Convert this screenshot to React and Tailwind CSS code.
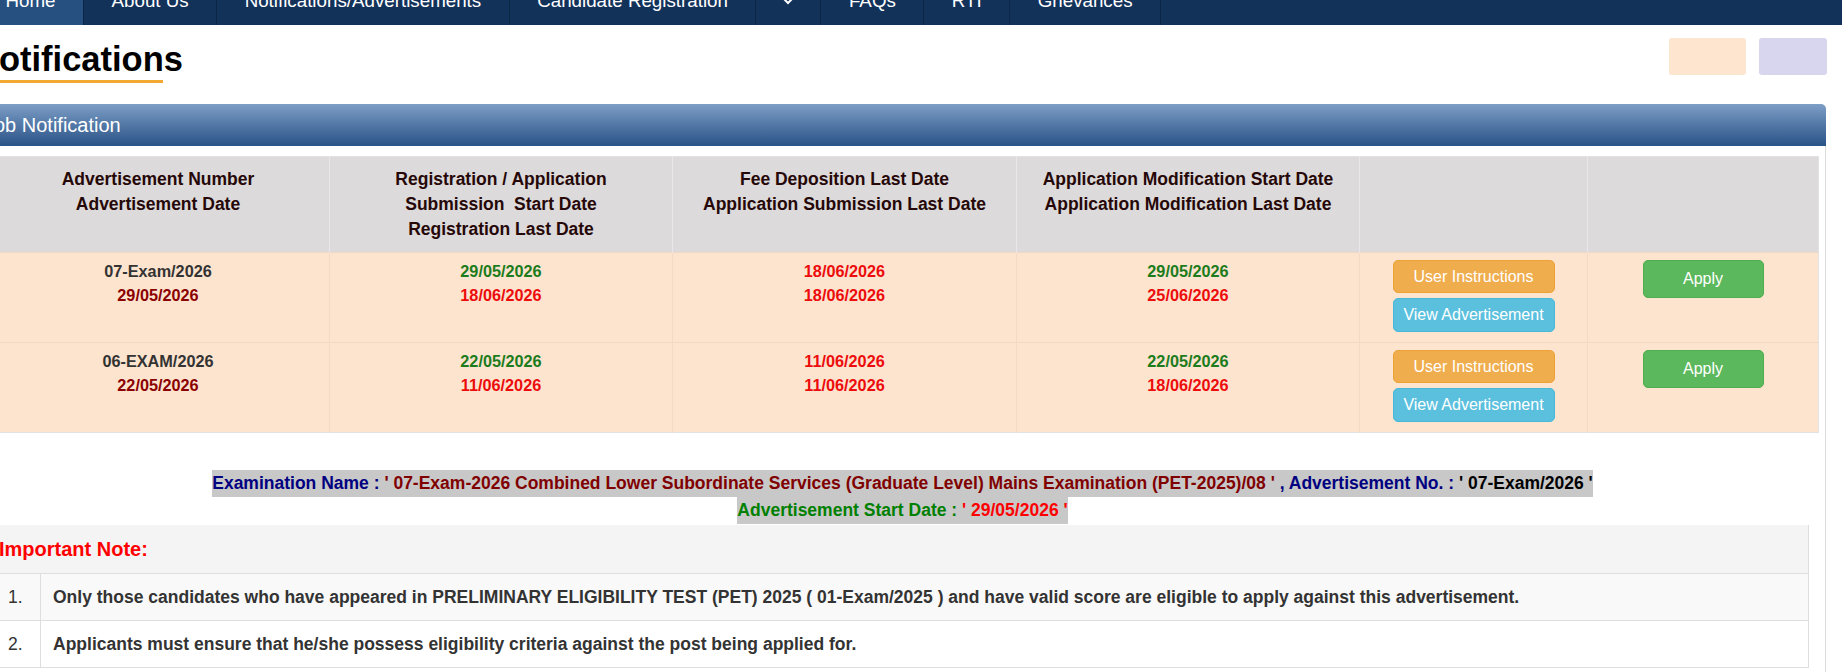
import React from 'react';

const navItems = [
  { label: 'Home', active: true },
  { label: 'About Us' },
  { label: 'Notifications/Advertisements' },
  { label: 'Candidate Registration' },
  { label: 'more', chevron: true },
  { label: 'FAQs' },
  { label: 'RTI' },
  { label: 'Grievances' },
];

const rows = [
  {
    adv: '07-Exam/2026',
    advDate: '29/05/2026',
    regStart: '29/05/2026',
    regLast: '18/06/2026',
    fee: '18/06/2026',
    subLast: '18/06/2026',
    modStart: '29/05/2026',
    modLast: '25/06/2026',
  },
  {
    adv: '06-EXAM/2026',
    advDate: '22/05/2026',
    regStart: '22/05/2026',
    regLast: '11/06/2026',
    fee: '11/06/2026',
    subLast: '11/06/2026',
    modStart: '22/05/2026',
    modLast: '18/06/2026',
  },
];

function DateCell({ top, bottom, topClass, bottomClass }) {
  return (
    <td className="border-r border-[#f3dac6] px-[12px] pt-[6px] pb-[10px] align-top text-center text-[16.25px] font-bold leading-[24px]">
      <div className={topClass}>{top}</div>
      <div className={bottomClass}>{bottom}</div>
    </td>
  );
}

export default function App() {
  return (
    <div className="min-h-screen overflow-hidden bg-white font-['Liberation_Sans',Arial,Helvetica,sans-serif] text-[#333]">
      <nav className="flex h-[25px] overflow-hidden bg-[#13325a] text-[18.75px] leading-[27px] text-white">
        <ul className="-ml-[22px] flex shrink-0">
          {navItems.map((item) =>
            item.chevron ? (
              <li key={item.label} className="flex items-end border-r border-[#0c2645] px-[24px] pb-[20px]">
                <svg width="16" height="10" viewBox="0 0 16 10" fill="none" stroke="white" strokeWidth="2">
                  <path d="M1.5 1.5 L8 8 L14.5 1.5" />
                </svg>
              </li>
            ) : (
              <li
                key={item.label}
                className={
                  item.active
                    ? 'flex items-end border-r border-[#0c2645] bg-[#25507f] px-[27.5px] pb-[11px]'
                    : 'flex items-end border-r border-[#0c2645] px-[27.5px] pb-[11px]'
                }
              >
                {item.label}
              </li>
            )
          )}
        </ul>
      </nav>

      <div className="-ml-[21px] w-[1848px]">
        <div className="mt-[13px] flex items-start justify-between">
          <div className="pt-[1px]">
            <h1 className="-ml-[5px] text-[34.5px] font-bold leading-[40px] text-black">Notifications</h1>
            <div className="mt-[1px] h-[3px] w-[184px] bg-[#f2a833]" />
          </div>
          <div className="flex gap-[13px]">
            <div className="h-[37px] w-[77px] rounded-[3px] bg-[#fde5d0]" />
            <div className="h-[37px] w-[68px] rounded-[3px] bg-[#d8d5ef]" />
          </div>
        </div>

        <div className="mt-[21px] mr-[1px]">
          <div className="flex h-[42px] items-center rounded-t-[5px] bg-linear-to-b from-[#7d9ec6] to-[#2a5387] pl-[5px] text-[20px] text-white">
            Job Notification
          </div>

          <div className="border-x border-b border-[#dcdcdc] px-[6px] pt-[10px] pb-[20px]">
            <table className="w-full table-fixed border-collapse border border-[#e2e2e2]">
              <colgroup>
                <col className="w-[343px]" />
                <col className="w-[343px]" />
                <col className="w-[344px]" />
                <col className="w-[343px]" />
                <col className="w-[228px]" />
                <col />
              </colgroup>
              <thead>
                <tr className="bg-[#dcdada] text-[17.5px] font-bold leading-[25px] text-[#260808]">
                  <th className="border-r border-[#e9e7e7] px-[12px] py-[10px] align-top">
                    Advertisement Number
                    <br />
                    Advertisement Date
                  </th>
                  <th className="border-r border-[#e9e7e7] px-[12px] py-[10px] align-top">
                    Registration / Application
                    <br />
                    Submission&nbsp; Start Date
                    <br />
                    Registration Last Date
                  </th>
                  <th className="border-r border-[#e9e7e7] px-[12px] py-[10px] align-top">
                    Fee Deposition Last Date
                    <br />
                    Application Submission Last Date
                  </th>
                  <th className="border-r border-[#e9e7e7] px-[12px] py-[10px] align-top">
                    Application Modification Start Date
                    <br />
                    Application Modification Last Date
                  </th>
                  <th className="border-r border-[#e9e7e7]" />
                  <th />
                </tr>
              </thead>
              <tbody>
                {rows.map((r) => (
                  <tr key={r.adv} className="border-t border-[#f1d8c4] bg-[#fde4cf]">
                    <DateCell top={r.adv} bottom={r.advDate} topClass="text-[#333]" bottomClass="text-[#8b0000]" />
                    <DateCell top={r.regStart} bottom={r.regLast} topClass="text-[#1c7c1c]" bottomClass="text-[#ec0c0c]" />
                    <DateCell top={r.fee} bottom={r.subLast} topClass="text-[#ec0c0c]" bottomClass="text-[#ec0c0c]" />
                    <DateCell top={r.modStart} bottom={r.modLast} topClass="text-[#1c7c1c]" bottomClass="text-[#ec0c0c]" />
                    <td className="border-r border-[#f3dac6] pt-[6px] pb-[10px] align-top">
                      <div className="mx-auto flex w-[162px] flex-col gap-[5px] pt-[1px]">
                        <button className="h-[33px] rounded-[5px] border border-[#eea236] bg-[#f0ad4e] text-[16px] text-white">
                          User Instructions
                        </button>
                        <button className="h-[34px] rounded-[5px] border border-[#46b8da] bg-[#5bc0de] text-[16px] text-white">
                          View Advertisement
                        </button>
                      </div>
                    </td>
                    <td className="pt-[6px] pb-[10px] align-top">
                      <button className="mx-auto mt-[1px] block h-[38px] w-[121px] rounded-[5px] border border-[#4cae4c] bg-[#5cb85c] text-[16px] text-white">
                        Apply
                      </button>
                    </td>
                  </tr>
                ))}
              </tbody>
            </table>

            <div className="mt-[37px] text-center text-[17.5px] font-bold leading-[27px]">
              <span className="inline-block bg-[#c8c8c8]">
                <span className="text-[#000080]">Examination Name : </span>
                <span className="text-[#800000]">' 07-Exam-2026 Combined Lower Subordinate Services (Graduate Level) Mains Examination (PET-2025)/08 '</span>
                <span className="text-[#000080]"> , Advertisement No. : </span>
                <span className="text-black">' 07-Exam/2026 '</span>
              </span>
              <br />
              <span className="inline-block bg-[#c8c8c8]">
                <span className="text-[#008000]">Advertisement Start Date : </span>
                <span className="text-[#ff0000]">' 29/05/2026 '</span>
              </span>
            </div>

            <div className="mx-[10px] mt-[1px] border-r border-[#dedede]">
              <div className="flex h-[48px] items-center bg-[#f4f4f4] pl-[3px] text-[20px] font-bold text-[#ff0000]">
                Important Note:
              </div>
              <div className="flex h-[47px] border-t border-[#dedede] bg-[#f9f9f9] text-[17.5px]">
                <div className="flex w-[44.5px] shrink-0 items-center border-r border-[#dedede] pl-[12px]">1.</div>
                <div className="flex items-center pl-[12.5px] font-bold">
                  Only those candidates who have appeared in PRELIMINARY ELIGIBILITY TEST (PET) 2025 ( 01-Exam/2025 ) and have valid score are eligible to apply against this advertisement.
                </div>
              </div>
              <div className="flex h-[48px] border-y border-[#dedede] bg-white text-[17.5px]">
                <div className="flex w-[44.5px] shrink-0 items-center border-r border-[#dedede] pl-[12px]">2.</div>
                <div className="flex items-center pl-[12.5px] font-bold">
                  Applicants must ensure that he/she possess eligibility criteria against the post being applied for.
                </div>
              </div>
            </div>
          </div>
        </div>
      </div>
    </div>
  );
}
